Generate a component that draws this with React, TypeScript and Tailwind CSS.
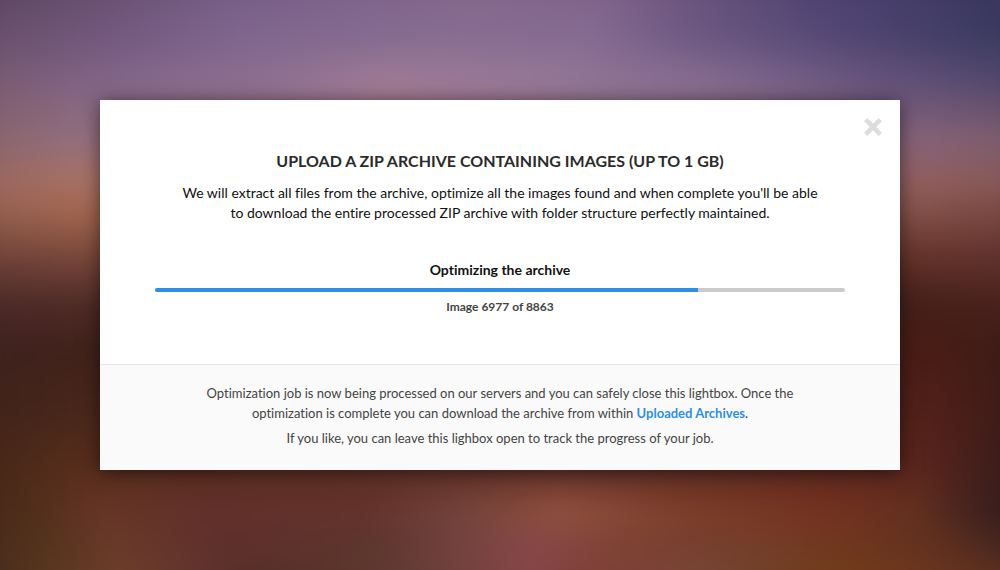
type BackdropRow = { top: number; colors: [string, number][] };

// Each row is a horizontal gradient at a height (in percent); rows fade into one another.
const backdropRows: BackdropRow[] = [
  { top: 0, colors: [['#58425f', 0], ['#67506f', 13], ['#735b84', 23], ['#7c628a', 35], ['#846689', 48], ['#7e6188', 60], ['#665179', 70], ['#4e4271', 80], ['#433c68', 90], ['#37325a', 100]] },
  { top: 9, colors: [['#67506b', 0], ['#73597f', 13], ['#7f668d', 25], ['#876d92', 45], ['#866c92', 58], ['#6a5680', 70], ['#524674', 83], ['#3c3b61', 97], ['#3b3960', 100]] },
  { top: 17, colors: [['#7a5a70', 0], ['#84668a', 13], ['#907092', 28], ['#a17b95', 39], ['#957797', 55], ['#866d90', 70], ['#68547c', 86], ['#51476b', 100]] },
  { top: 26, colors: [['#88646c', 0], ['#93707f', 10], ['#a17b88', 40], ['#86637a', 90], ['#7c5c6b', 100]] },
  { top: 33, colors: [['#9a665e', 0], ['#a97165', 10], ['#a97165', 50], ['#925f5e', 90], ['#85585a', 100]] },
  { top: 38, colors: [['#935f50', 0], ['#a3674f', 10], ['#9a6150', 50], ['#85514a', 90], ['#764740', 100]] },
  { top: 45, colors: [['#71443a', 0], ['#7c493c', 10], ['#7c493c', 50], ['#65342b', 90], ['#61332f', 100]] },
  { top: 53, colors: [['#4b2a29', 0], ['#502c27', 10], ['#532b24', 50], ['#45201a', 90], ['#4a221d', 100]] },
  { top: 60, colors: [['#3f2220', 0], ['#40221b', 10], ['#4b251d', 50], ['#481d15', 92], ['#3c1b17', 100]] },
  { top: 70, colors: [['#3f2319', 0], ['#48271b', 10], ['#592b23', 50], ['#4f2019', 92], ['#3a1a18', 100]] },
  { top: 79, colors: [['#452718', 0], ['#582d1c', 10], ['#602f26', 50], ['#5b251d', 90], ['#361b1a', 100]] },
  { top: 87, colors: [['#46291a', 0], ['#512e1a', 5], ['#673526', 12], ['#62302b', 22], ['#63332c', 37], ['#70413a', 45], ['#91503f', 56], ['#7c3e2a', 68], ['#753220', 81], ['#63301f', 90], ['#3b1f1e', 97], ['#371c1d', 100]] },
  { top: 93, colors: [['#462b1b', 0], ['#54331d', 6], ['#693a2a', 13], ['#5e302c', 24], ['#5d372e', 38], ['#73423f', 46], ['#864848', 53], ['#7d4234', 62], ['#743f2c', 73], ['#70381e', 83], ['#61311f', 92], ['#40251f', 100]] },
  { top: 100, colors: [['#402b20', 0], ['#5a3820', 6], ['#70412c', 14], ['#603430', 21], ['#532d28', 27], ['#5a342b', 34], ['#683f3a', 43], ['#854648', 52], ['#813f39', 59], ['#78493b', 69], ['#70411f', 78], ['#733c1a', 86], ['#6c3520', 95], ['#683322', 100]] },
];

function Backdrop() {
  return (
    <div aria-hidden="true" className="absolute inset-0 -z-10 overflow-hidden bg-[#5a352f]">
      <div className="absolute -inset-5 blur-[10px]">
        {backdropRows.map((row, i) => (
          <div
            key={row.top}
            className="absolute inset-0"
            style={{
              backgroundImage: `linear-gradient(90deg, ${row.colors.map(([c, x]) => `${c} ${x}%`).join(', ')})`,
              maskImage: i === 0 ? undefined : `linear-gradient(transparent ${backdropRows[i - 1].top}%, black ${row.top}%)`,
            }}
          />
        ))}
      </div>
    </div>
  );
}

function ArchiveProgress({ done, total }: { done: number; total: number }) {
  return (
    <div className="mt-[37px] px-[55px]">
      <p id="progress-label" className="text-[14px] leading-5 font-bold text-[#111]">Optimizing the archive</p>
      <div
        role="progressbar"
        aria-labelledby="progress-label"
        aria-valuemin={0}
        aria-valuemax={total}
        aria-valuenow={done}
        className="mt-2 h-1 overflow-hidden rounded-full bg-[#cbcbcb]"
      >
        <div className="h-full bg-[#2d8fe5]" style={{ width: `${(done / total) * 100}%` }} />
      </div>
      <p className="mt-[5px] text-[12px] leading-5 font-bold text-[#444]">Image {done} of {total}</p>
    </div>
  );
}

export default function App() {
  return (
    <main className="relative isolate flex min-h-screen items-center justify-center font-[Lato,sans-serif] [font-variant-ligatures:none]">
      <Backdrop />
      <section
        role="dialog"
        aria-labelledby="dialog-title"
        className="relative w-4/5 bg-white text-center shadow-[0_2px_18px_rgba(0,0,0,0.55)]"
      >
        <button type="button" aria-label="Close" className="absolute top-4 right-4 p-0.5 text-[#dcdcdc]">
          <svg viewBox="0 0 18 18" className="size-[18px]" fill="none" stroke="currentColor" strokeWidth="4.6">
            <path d="M1.7 1.7 16.3 16.3M16.3 1.7 1.7 16.3" />
          </svg>
        </button>
        <div className="pt-[51px] pb-[47px]">
          <h1 id="dialog-title" className="text-[16px] leading-5 font-bold text-[#2b2b2b]">
            UPLOAD A ZIP ARCHIVE CONTAINING IMAGES (UP TO 1 GB)
          </h1>
          <p className="mt-3 text-[14px] leading-5 text-[#111]">
            We will extract all files from the archive, optimize all the images found and when complete you'll be able
            <br />
            to download the entire processed ZIP archive with folder structure perfectly maintained.
          </p>
          <ArchiveProgress done={6977} total={8863} />
        </div>
        <footer className="border-t border-[#e6e6e6] bg-[#fafafa] pt-[18px] pb-[22px] text-[13px] leading-5 text-[#444]">
          <p>
            Optimization job is now being processed on our servers and you can safely close this lightbox. Once the
            <br />
            optimization is complete you can download the archive from within{' '}
            <a href="#archives" className="font-bold text-[#2d8fe5]">Uploaded Archives</a>.
          </p>
          <p className="mt-[5px]">If you like, you can leave this lighbox open to track the progress of your job.</p>
        </footer>
      </section>
    </main>
  );
}
